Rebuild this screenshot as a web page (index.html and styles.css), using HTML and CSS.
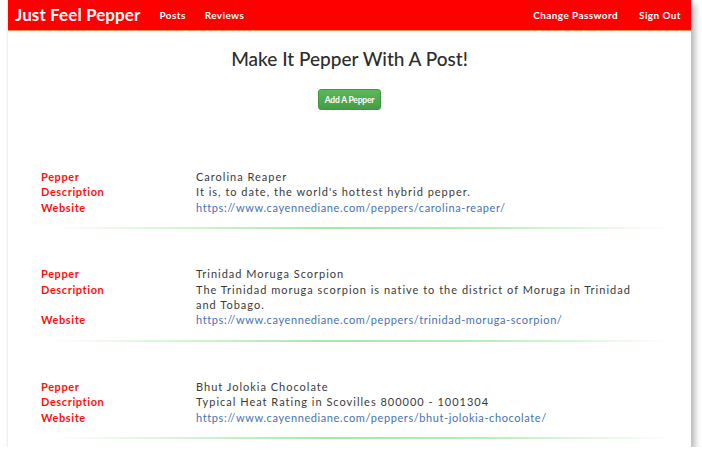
FILE: index.html
```html
<!DOCTYPE html>
<html lang="en">
<head>
<meta charset="utf-8">
<title>Just Feel Pepper</title>
<link rel="stylesheet" href="styles.css">
</head>
<body>
<div class="window">
  <nav class="navbar">
    <a class="brand" href="#">Just Feel Pepper</a>
    <ul class="nav-left">
      <li><a href="#">Posts</a></li>
      <li><a href="#">Reviews</a></li>
    </ul>
    <ul class="nav-right">
      <li><a href="#">Change Password</a></li>
      <li><a href="#">Sign Out</a></li>
    </ul>
  </nav>
  <main class="content">
    <h1 class="title">Make It Pepper With A Post!</h1>
    <div class="actions"><button class="btn-add">Add A Pepper</button></div>

    <section class="entry">
      <dl class="fields">
        <dt>Pepper</dt><dd>Carolina Reaper</dd>
        <dt>Description</dt><dd>It is, to date, the world's hottest hybrid pepper.</dd>
        <dt>Website</dt><dd><a href="#">https://www.cayennediane.com/peppers/carolina-reaper/</a></dd>
      </dl>
      <div class="sep"></div>
    </section>

    <section class="entry">
      <dl class="fields">
        <dt>Pepper</dt><dd>Trinidad Moruga Scorpion</dd>
        <dt>Description</dt><dd>The Trinidad moruga scorpion is native to the district of Moruga in Trinidad and Tobago.</dd>
        <dt>Website</dt><dd><a href="#">https://www.cayennediane.com/peppers/trinidad-moruga-scorpion/</a></dd>
      </dl>
      <div class="sep"></div>
    </section>

    <section class="entry">
      <dl class="fields">
        <dt>Pepper</dt><dd>Bhut Jolokia Chocolate</dd>
        <dt>Description</dt><dd>Typical Heat Rating in Scovilles 800000 - 1001304</dd>
        <dt>Website</dt><dd><a href="#">https://www.cayennediane.com/peppers/bhut-jolokia-chocolate/</a></dd>
      </dl>
      <div class="sep"></div>
    </section>
  </main>
</div>
</body>
</html>
```

FILE: styles.css
```css
* { box-sizing: border-box; }

html, body {
  margin: 0;
  padding: 0;
  background: #ffffff;
}

body {
  font-family: Lato, "Open Sans", sans-serif;
  color: #3a3a3a;
}

.window {
  margin-left: 7px;
  width: 684px;
  height: 447px;
  overflow: hidden;
  background: #ffffff;
  border-left: 1px solid #f0f0f0;
  box-shadow: 4px 4px 6px rgba(0, 0, 0, 0.28);
}

.navbar {
  display: flex;
  align-items: center;
  height: 31px;
  background: #ff0000;
  border-bottom: 1px solid #f7935c;
  padding: 0 10px 0 7px;
}

.navbar a {
  color: #ffffff;
  text-decoration: none;
}

.brand {
  font-size: 17px;
  font-weight: 700;
  letter-spacing: 0.1px;
  margin-right: 19px;
  padding-bottom: 1px;
}

.nav-left, .nav-right {
  list-style: none;
  display: flex;
  margin: 0;
  padding: 0;
  gap: 19px;
  font-size: 10px;
  font-weight: 700;
  letter-spacing: 0.4px;
}

.nav-right {
  margin-left: auto;
  gap: 21px;
}

.content {
  padding: 0 32px;
}

.title {
  margin: 17px 0 0;
  text-align: center;
  font-size: 19px;
  font-weight: 500;
  letter-spacing: 0;
  line-height: 22px;
  color: #2d2d2d;
}

.actions {
  display: flex;
  justify-content: center;
  margin-top: 19px;
  margin-bottom: 22px;
}

.btn-add {
  height: 21px;
  width: 63px;
  padding: 0;
  border: 1px solid #419641;
  border-radius: 3px;
  background: linear-gradient(#5cb85c, #449d44);
  color: #ffffff;
  font-family: Lato, sans-serif;
  font-size: 8.5px;
  font-weight: 700;
  letter-spacing: -0.2px;
}

.entry {
  padding-top: 37px;
}

.fields {
  display: grid;
  grid-template-columns: 155px 445px;
  margin: 0;
  padding-left: 1px;
  font-size: 11px;
  line-height: 15.4px;
}

.fields dt {
  color: #ff1010;
  font-weight: 700;
  letter-spacing: 0.6px;
}

.fields dd {
  margin: 0;
  color: #3a3a3a;
  letter-spacing: 1px;
}

.fields a {
  color: #4672b4;
  text-decoration: none;
  letter-spacing: 0.6px;
}

.sep {
  margin: 12px 0 0 10px;
  width: 620px;
  height: 2px;
  background: linear-gradient(to right, rgba(180, 235, 180, 0), #a9e5a9 45%, #b9ecb9 70%, rgba(200, 240, 200, 0));
}
```
